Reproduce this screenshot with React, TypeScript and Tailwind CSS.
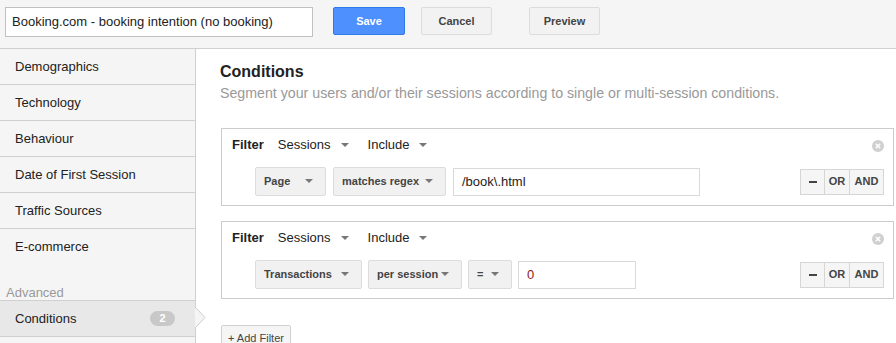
import React from 'react';

const navItems = ['Demographics', 'Technology', 'Behaviour', 'Date of First Session', 'Traffic Sources', 'E-commerce'];

function Caret() {
  return (
    <svg width="8" height="5" viewBox="0 0 8 5" className="shrink-0">
      <path d="M0 0 L8 0 L4 4 Z" fill="#777" />
    </svg>
  );
}

function Dropdown({ label }: { label: string }) {
  return (
    <div className="flex items-center gap-[10px] text-[13px] text-[#222]">
      <span>{label}</span>
      <Caret />
    </div>
  );
}

function SelectButton({ label, width }: { label: string; width: string }) {
  return (
    <div
      className={`flex h-[29px] items-center justify-between rounded-[2px] border border-[#dcdcdc] bg-[#f1f1f1] pl-[8px] pr-[12px] text-[11px] font-bold text-[#444] ${width}`}
    >
      <span>{label}</span>
      <Caret />
    </div>
  );
}

interface FilterBoxProps {
  selects: { label: string; width: string }[];
  value: string;
  inputWidth: string;
  valueColor: string;
  gap: string;
}

function FilterBox({ selects, value, inputWidth, valueColor, gap }: FilterBoxProps) {
  return (
    <div className="relative w-[673px] border border-[#cccccc] bg-white pb-[9px] pl-[10px] pr-[9px] pt-[7px]">
      <div className="flex h-[18px] items-center">
        <span className="text-[13px] font-bold text-[#222]">Filter</span>
        <div className="ml-[14px] flex items-center gap-[19px]">
          <Dropdown label="Sessions" />
          <Dropdown label="Include" />
        </div>
      </div>
      <svg width="12" height="12" viewBox="0 0 12 12" className="absolute right-[9px] top-[11px]">
        <circle cx="6" cy="6" r="6" fill="#d0d0d0" />
        <path d="M3.8 3.8 L8.2 8.2 M8.2 3.8 L3.8 8.2" stroke="#fff" strokeWidth="1.5" />
      </svg>
      <div className="mt-[13px] flex items-center pl-[23px]">
        <div className={`flex items-center ${gap}`}>
          {selects.map(s => (
            <SelectButton key={s.label} label={s.label} width={s.width} />
          ))}
          <div
            className={`flex h-[28px] items-center border border-[#d9d9d9] bg-white pl-[8px] text-[13px] ${inputWidth}`}
            style={{ color: valueColor }}
          >
            {value}
          </div>
        </div>
        <div className="ml-auto flex h-[26px] border border-[#d6d6d6] bg-[#f5f5f5] text-[11px] font-bold text-[#444]">
          <div className="flex w-[24px] items-center justify-center border-r border-[#d6d6d6]">
            <span className="block h-[2px] w-[8px] bg-[#444]" />
          </div>
          <div className="flex w-[25px] items-center justify-center border-r border-[#d6d6d6]">OR</div>
          <div className="flex w-[33px] items-center justify-center">AND</div>
        </div>
      </div>
    </div>
  );
}

export default function App() {
  return (
    <div className="h-[343px] w-[896px] overflow-hidden bg-white font-['Liberation_Sans',Arial,sans-serif]">
      {/* Barra superior */}
      <div className="flex h-[49px] items-start border-b border-[#d0d0d0] bg-[#f5f5f5] pl-[5px] pt-[7px]">
        <div className="flex h-[30px] w-[308px] items-center border border-[#c0c0c0] bg-white pl-[6px] text-[13px] text-[#222]">
          Booking.com - booking intention (no booking)
        </div>
        <button className="ml-[20px] h-[28px] w-[72px] rounded-[2px] border border-[#3079ed] bg-[#4d90fe] text-[11px] font-bold text-white">
          Save
        </button>
        <button className="ml-[16px] h-[28px] w-[71px] rounded-[2px] border border-[#dcdcdc] bg-[#f2f2f2] text-[11px] font-bold text-[#444]">
          Cancel
        </button>
        <button className="ml-[37px] h-[28px] w-[71px] rounded-[2px] border border-[#dcdcdc] bg-[#f2f2f2] text-[11px] font-bold text-[#444]">
          Preview
        </button>
      </div>

      <div className="flex h-[294px]">
        {/* Menu lateral */}
        <div className="relative w-[196px] shrink-0 border-r border-[#d0d0d0] bg-[#f5f5f5]">
          {navItems.map((item, i) => (
            <div
              key={item}
              className={`flex h-[36px] items-center pl-[15px] text-[13px] text-[#222] ${i < navItems.length - 1 ? 'border-b border-[#d0d0d0]' : ''}`}
            >
              {item}
            </div>
          ))}
          <div className="mt-[20px] pl-[6px] text-[13px] leading-[16px] text-[#999]">Advanced</div>
          <div className="relative mt-[-1px] flex h-[37px] items-center justify-between border-y border-[#d0d0d0] bg-[#e8e8e8] pl-[15px] pr-[20px] text-[13px] text-[#222]">
            <span>Conditions</span>
            <span className="flex h-[15px] w-[25px] items-center justify-center rounded-full bg-[#c8c8c8] text-[11px] font-bold text-white">
              2
            </span>
          </div>
          <svg width="11" height="22" viewBox="0 0 11 22" className="absolute right-[-11px] top-[258px]">
            <path d="M0 0 L10 10.5 L0 21" fill="#f5f5f5" stroke="#cccccc" strokeWidth="1" />
          </svg>
        </div>

        {/* Conteúdo principal */}
        <div className="flex-1 pl-[24px] pt-[13px]">
          <h2 className="text-[16px] font-bold leading-[20px] text-[#222]">Conditions</h2>
          <p className="mt-[3px] text-[14.2px] leading-[17px] text-[#999]">
            Segment your users and/or their sessions according to single or multi-session conditions.
          </p>
          <div className="mt-[26px] ml-[1px] flex flex-col gap-[15px]">
            <FilterBox
              selects={[
                { label: 'Page', width: 'w-[71px]' },
                { label: 'matches regex', width: 'w-[113px]' },
              ]}
              value="/book\.html"
              inputWidth="w-[247px]"
              valueColor="#222"
              gap="gap-[7px]"
            />
            <FilterBox
              selects={[
                { label: 'Transactions', width: 'w-[107px]' },
                { label: 'per session', width: 'w-[94px]' },
                { label: '=', width: 'w-[44px]' },
              ]}
              value="0"
              inputWidth="w-[118px]"
              valueColor="#8a1a1a"
              gap="gap-[6px]"
            />
          </div>
          <button className="mt-[26px] ml-[1px] h-[26px] rounded-[2px] border border-[#d0d0d0] bg-[#f5f5f5] px-[6px] text-[11px] text-[#444]">
            + Add Filter
          </button>
        </div>
      </div>
    </div>
  );
}
